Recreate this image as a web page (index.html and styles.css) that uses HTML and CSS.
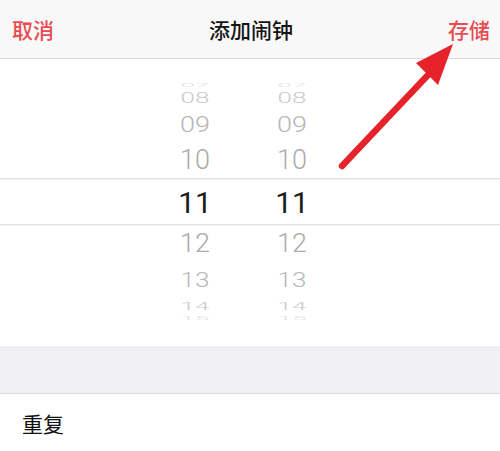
FILE: index.html
```html
<!DOCTYPE html>
<html lang="zh">
<head>
<meta charset="utf-8">
<link rel="stylesheet" href="styles.css">
</head>
<body>
<div class="page">
  <header class="nav">
    <span class="nav-btn left">取消</span>
    <span class="nav-title">添加闹钟</span>
    <span class="nav-btn right">存储</span>
  </header>
  <section class="picker">
    <div class="wheel">
      <div class="it i07">07</div>
      <div class="it i08">08</div>
      <div class="it i09">09</div>
      <div class="it i10">10</div>
      <div class="it i11">11</div>
      <div class="it i12">12</div>
      <div class="it i13">13</div>
      <div class="it i14">14</div>
      <div class="it i15">15</div>
    </div>
    <div class="wheel">
      <div class="it i07">07</div>
      <div class="it i08">08</div>
      <div class="it i09">09</div>
      <div class="it i10">10</div>
      <div class="it i11">11</div>
      <div class="it i12">12</div>
      <div class="it i13">13</div>
      <div class="it i14">14</div>
      <div class="it i15">15</div>
    </div>
  </section>
  <div class="band"></div>
  <div class="row">重复</div>
  <svg class="arrow" width="500" height="451" viewBox="0 0 500 451">
    <line x1="342" y1="166" x2="428" y2="75" stroke="#e6222b" stroke-width="6.5" stroke-linecap="round"/>
    <polygon points="453,44 416,63 438,85" fill="#e6222b"/>
  </svg>
</div>
</body>
</html>
```
FILE: styles.css
```css
html, body {
  margin: 0;
  padding: 0;
  background: #ffffff;
}
.page {
  position: relative;
  width: 500px;
  height: 451px;
  overflow: hidden;
  font-family: "Noto Sans CJK SC", "Noto Sans", sans-serif;
}
.nav {
  height: 58px;
  border-bottom: 1px solid #dadada;
  background: #f8f8f8;
  display: grid;
  grid-template-columns: 1fr auto 1fr;
  align-items: center;
  padding: 0 10px 0 12px;
  font-size: 21px;
  font-weight: 500;
}
.nav-btn {
  color: #e94b50;
}
.nav-btn.right {
  justify-self: end;
}
.nav-title {
  color: #141414;
}
.picker {
  height: 287px;
  display: flex;
  gap: 37px;
  padding-left: 165px;
  background:
    linear-gradient(to bottom,
      transparent 119px, #e2e2e2 119px, #e2e2e2 120px, #f3f3f3 120px, #f3f3f3 121px, transparent 121px,
      transparent 165px, #e2e2e2 165px, #e2e2e2 166px, #f3f3f3 166px, #f3f3f3 167px, transparent 167px);
}
.wheel {
  width: 60px;
  padding-top: 20px;
  display: flex;
  flex-direction: column;
  font-family: Roboto, "Liberation Sans", sans-serif;
  font-weight: 300;
}
.it {
  display: flex;
  align-items: center;
  justify-content: center;
  overflow: visible;
  white-space: nowrap;
}
.i07 { height: 12px; font-size: 26px; color: #e2e2e2; transform: scaleY(0.22); }
.i08 { height: 14px; font-size: 26px; color: #c9c9c9; transform: scaleY(0.55); }
.i09 { height: 40px; font-size: 27px; color: #b6b6b6; transform: scaleY(0.83); }
.i10 { height: 30px; font-size: 27px; color: #ababab; }
.i11 { height: 54px; font-size: 30px; color: #1c1c1c; font-weight: 400; }
.i12 { height: 30px; font-size: 27px; color: #ababab; transform: scaleY(0.94); }
.i13 { height: 42px; font-size: 26px; color: #b8b8b8; transform: scaleY(0.76); }
.i14 { height: 10px; font-size: 26px; color: #cbcbcb; transform: scaleY(0.43); }
.i15 { height: 14px; font-size: 26px; color: #e0e0e0; transform: scaleY(0.18); }
.band {
  height: 47px;
  background: #efeff4;
  border-bottom: 1px solid #dcdcdf;
}
.row {
  height: 57px;
  display: flex;
  align-items: center;
  padding-left: 22px;
  font-size: 21px;
  color: #111111;
}
.arrow {
  position: absolute;
  left: 0;
  top: 0;
  pointer-events: none;
}
```
